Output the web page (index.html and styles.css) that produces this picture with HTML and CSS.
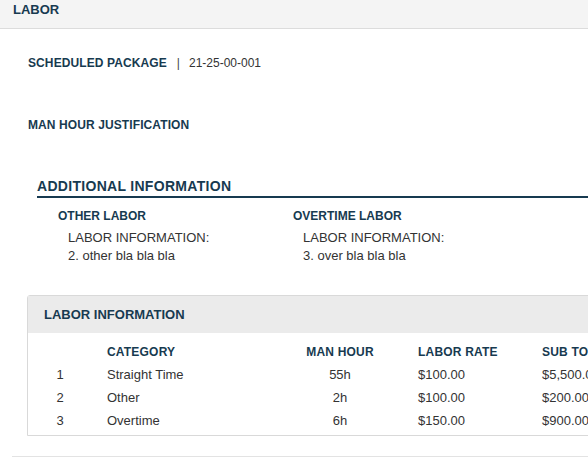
FILE: index.html
```html
<!DOCTYPE html>
<html lang="en">
<head>
<meta charset="utf-8">
<title>Labor</title>
<link rel="stylesheet" href="styles.css">
</head>
<body>
<div class="page">
  <header class="bar">LABOR</header>
  <main class="content">
    <div class="field field-first">
      <span class="label">SCHEDULED PACKAGE</span>
      <span class="sep">|</span>
      <span class="value">21-25-00-001</span>
    </div>
    <div class="field field-second">
      <span class="label">MAN HOUR JUSTIFICATION</span>
    </div>

    <section class="additional">
      <h2 class="section-title">ADDITIONAL INFORMATION</h2>
      <div class="cols">
        <div class="col">
          <div class="col-label">OTHER LABOR</div>
          <div class="col-text">LABOR INFORMATION:<br>2. other bla bla bla</div>
        </div>
        <div class="col">
          <div class="col-label">OVERTIME LABOR</div>
          <div class="col-text">LABOR INFORMATION:<br>3. over bla bla bla</div>
        </div>
      </div>
    </section>

    <section class="panel">
      <div class="panel-head">LABOR INFORMATION</div>
      <div class="table">
        <div class="row head">
          <div class="c-num"></div>
          <div class="c-cat">CATEGORY</div>
          <div class="c-hour">MAN HOUR</div>
          <div class="c-rate">LABOR RATE</div>
          <div class="c-sub">SUB TOTAL</div>
        </div>
        <div class="row">
          <div class="c-num">1</div>
          <div class="c-cat">Straight Time</div>
          <div class="c-hour">55h</div>
          <div class="c-rate">$100.00</div>
          <div class="c-sub">$5,500.00</div>
        </div>
        <div class="row">
          <div class="c-num">2</div>
          <div class="c-cat">Other</div>
          <div class="c-hour">2h</div>
          <div class="c-rate">$100.00</div>
          <div class="c-sub">$200.00</div>
        </div>
        <div class="row">
          <div class="c-num">3</div>
          <div class="c-cat">Overtime</div>
          <div class="c-hour">6h</div>
          <div class="c-rate">$150.00</div>
          <div class="c-sub">$900.00</div>
        </div>
      </div>
    </section>
  </main>
  <div class="rule"></div>
</div>
</body>
</html>
```

FILE: styles.css
```css
html, body {
  margin: 0;
  padding: 0;
  overflow: hidden;
  background: #ffffff;
}
body {
  font-family: "Liberation Sans", Arial, Helvetica, sans-serif;
  color: #333333;
}
.page {
  width: 720px;
}
.bar {
  height: 26px;
  padding: 2px 0 0 13px;
  line-height: 16px;
  font-size: 13px;
  font-weight: 700;
  color: #173a50;
  background: #f4f4f4;
  border-bottom: 1px solid #dcdcdc;
}
.content {
  padding-left: 28px;
}
.field {
  display: flex;
  align-items: baseline;
  line-height: 16px;
  font-size: 12px;
}
.field-first {
  margin-top: 26px;
}
.field-second {
  margin-top: 46px;
}
.label {
  font-weight: 700;
  color: #173a50;
  letter-spacing: 0.1px;
}
.sep {
  margin: 0 9px 0 10px;
  color: #444;
}
.value {
  color: #333;
}
.additional {
  margin: 44px 0 0 9px;
}
.section-title {
  margin: 0;
  font-size: 14px;
  line-height: 18px;
  padding-bottom: 1px;
  font-weight: 700;
  color: #173a50;
  border-bottom: 2px solid #173a50;
  letter-spacing: 0.3px;
}
.cols {
  display: grid;
  grid-template-columns: 235px 235px;
  padding: 10px 0 0 21px;
}
.col-label {
  font-size: 12px;
  line-height: 16px;
  font-weight: 700;
  color: #173a50;
}
.col-text {
  margin-top: 5px;
  padding-left: 10px;
  font-size: 13px;
  line-height: 18px;
  color: #333;
}
.panel {
  margin: 30px 0 0 -1px;
  border: 1px solid #d9d9d9;
  border-radius: 3px 3px 0 0;
}
.panel-head {
  padding: 10px 16px;
  line-height: 17px;
  font-size: 13px;
  font-weight: 700;
  color: #173a50;
  background: #ebebeb;
}
.table {
  padding: 8px 0 3px;
}
.row {
  display: grid;
  grid-template-columns: 79px 183px 100px 152px 1fr;
  font-size: 13px;
  line-height: 23px;
  color: #333;
}
.row.head {
  font-size: 12px;
  font-weight: 700;
  line-height: 22px;
  color: #173a50;
  letter-spacing: 0.2px;
}
.c-num {
  text-align: center;
  padding-right: 15px;
}
.c-hour {
  text-align: center;
}
.c-rate {
  padding-left: 28px;
}
.rule {
  margin: 20px 0 0 12px;
  border-top: 1px solid #e3e3e3;
}
```
